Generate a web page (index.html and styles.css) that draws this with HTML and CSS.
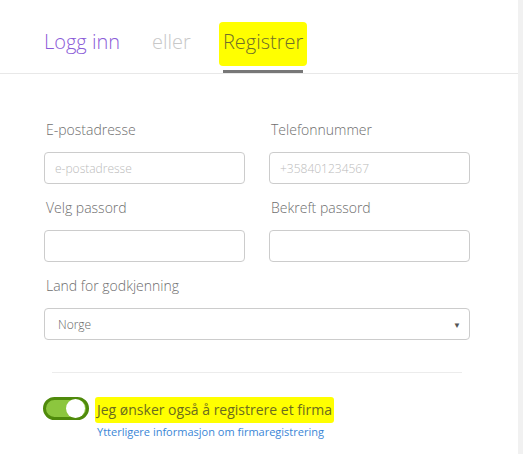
FILE: index.html
```html
<!DOCTYPE html>
<html lang="no">
<head>
    <meta charset="UTF-8">
    <meta name="viewport" content="width=device-width, initial-scale=1.0">
    <title>Registrer</title>
    <link rel="stylesheet" href="styles.css">
</head>
<body>
    <div class="page">
        <div class="tabs">
            <span class="tab tab-login">Logg inn</span>
            <span class="tab tab-or">eller</span>
            <span class="tab tab-active"><span class="marker">Registrer</span></span>
        </div>

        <form class="form">
            <div class="row">
                <div class="field">
                    <label class="label">E-postadresse</label>
                    <input class="input" type="text" placeholder="e-postadresse">
                </div>
                <div class="field">
                    <label class="label">Telefonnummer</label>
                    <input class="input" type="text" placeholder="+358401234567">
                </div>
            </div>
            <div class="row">
                <div class="field">
                    <label class="label">Velg passord</label>
                    <input class="input" type="password">
                </div>
                <div class="field">
                    <label class="label">Bekreft passord</label>
                    <input class="input" type="password">
                </div>
            </div>
            <div class="field">
                <label class="label">Land for godkjenning</label>
                <div class="select">
                    <span>Norge</span>
                    <span class="arrow">&#9660;</span>
                </div>
            </div>

            <hr class="divider">

            <div class="company">
                <span class="toggle"><span class="knob"></span></span>
                <div class="company-text">
                    <span class="marker-small">Jeg ønsker også å registrere et firma</span>
                    <a class="link" href="#">Ytterligere informasjon om firmaregistrering</a>
                </div>
            </div>
        </form>
    </div>
    <div class="scrollbar"></div>
</body>
</html>
```

FILE: styles.css
```css
html, body {
    height: 100%;
}

body {
    margin: 0;
    display: flex;
    font-family: 'Open Sans', 'Liberation Sans', sans-serif;
    color: #666;
    background: #fff;
}

.page {
    flex: 1;
}

.scrollbar {
    width: 5px;
    background: #f1f1f1;
}

.tabs {
    height: 73px;
    display: flex;
    align-items: flex-end;
    gap: 32px;
    padding-left: 44px;
    border-bottom: 1px solid #e8e8e8;
}

.tab {
    font-size: 20px;
    font-weight: 300;
    line-height: 30px;
    padding-bottom: 13px;
    border-bottom: 3px solid transparent;
}

.tab-login {
    color: #8b5cd8;
}

.tab-or {
    color: #c8c8c8;
}

.tab-active {
    color: #6f6f2a;
    border-bottom-color: #777;
}

.marker {
    background: #ffff00;
    padding: 6px 4px 11px;
    margin: 0 -4px;
    border-radius: 4px;
}

.form {
    padding: 46px 48px 0 44px;
}

.row {
    display: grid;
    grid-template-columns: 1fr 1fr;
    gap: 24px;
}

.field {
    display: flex;
    flex-direction: column;
    margin-bottom: 14px;
}

.label {
    font-size: 14px;
    font-weight: 300;
    line-height: 20px;
    margin: 0 0 12px 2px;
    color: #6e6e6e;
}

.input,
.select {
    box-sizing: border-box;
    height: 32px;
    border: 1px solid #ccc;
    border-radius: 4px;
    padding: 0 10px;
    font-family: inherit;
    font-size: 12px;
    font-weight: 300;
    color: #666;
}

.input::placeholder {
    color: #bbb;
}

.select {
    display: flex;
    align-items: center;
    justify-content: space-between;
    padding: 0 8px 0 13px;
}

.arrow {
    font-size: 8px;
    color: #555;
}

.divider {
    border: none;
    border-top: 1px solid #ececec;
    margin: 32px 8px 24px;
}

.company {
    display: flex;
    align-items: flex-start;
    gap: 6px;
    margin-left: -1px;
}

.toggle {
    box-sizing: border-box;
    width: 46px;
    height: 23px;
    border-radius: 12px;
    background: #8cc63e;
    border: 3px solid #4f8a0b;
    display: flex;
    justify-content: flex-end;
    align-items: center;
    padding-right: 1px;
    flex-shrink: 0;
}

.knob {
    width: 19px;
    height: 19px;
    border-radius: 50%;
    background: #fff;
}

.company-text {
    display: flex;
    flex-direction: column;
}

.marker-small {
    font-size: 14px;
    line-height: 20px;
    color: #6b6b1f;
    background: #ffff00;
    padding: 3px 2px;
    align-self: flex-start;
    border-radius: 3px;
}

.link {
    font-size: 11px;
    line-height: 16px;
    margin: 1px 0 0 2px;
    color: #3a86d6;
    text-decoration: none;
}
```
